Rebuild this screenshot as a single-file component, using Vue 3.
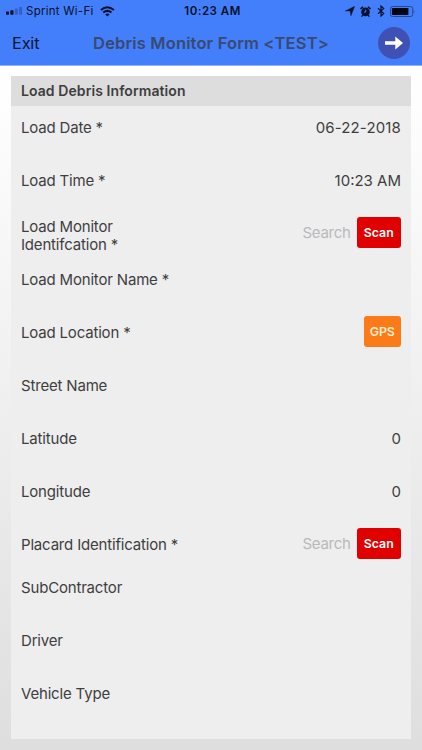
<script setup>
const rows = [
  { label: 'Load Date', required: true, value: '06-22-2018', kind: 'date' },
  { label: 'Load Time', required: true, value: '10:23 AM' },
  { label: 'Load Monitor Identifcation', required: true, search: true, button: 'Scan', kind: 'double' },
  { label: 'Load Monitor Name', required: true },
  { label: 'Load Location', required: true, button: 'GPS' },
  { label: 'Street Name' },
  { label: 'Latitude', value: '0' },
  { label: 'Longitude', value: '0' },
  { label: 'Placard Identification', required: true, search: true, button: 'Scan', kind: 'short' },
  { label: 'SubContractor' },
  { label: 'Driver' },
  { label: 'Vehicle Type' },
]
</script>

<template>
  <div class="screen">
    <header class="top">
      <div class="status">
        <div class="carrier">
          <svg class="signal" width="17" height="8" viewBox="0 0 17 8">
            <rect x="0" y="4.5" width="3" height="3.2" rx=".7" />
            <rect x="4.3" y="3.2" width="3.2" height="4.5" rx=".7" />
            <rect x="8.8" y="1.6" width="3" height="6.1" rx=".7" opacity=".28" />
            <rect x="13.1" y="0" width="3" height="7.7" rx=".7" opacity=".28" />
          </svg>
          <span class="carrier-name">Sprint Wi-Fi</span>
          <svg class="wifi" width="15" height="11" viewBox="0 0 15 11" fill="none" stroke="#06102a" stroke-width="2">
            <path d="M.9 4.1Q7.3-1.6 13.9 4.1" />
            <path d="M3.3 6.6Q7.4 3.2 11.5 6.6" />
            <path d="M5.2 8.3Q7.4 6.7 9.6 8.3L7.4 10.6Z" fill="#06102a" stroke="none" />
          </svg>
        </div>
        <span class="clock">10:23 AM</span>
        <div class="indicators">
          <svg width="10" height="10" viewBox="0 0 10 10"><path d="M9.7.3 5.9 9.8 5.2 5H.3Z" fill="#06102a" stroke="#06102a" stroke-width=".4" /></svg>
          <svg width="11" height="11" viewBox="0 0 11 11">
            <circle cx="5.5" cy="5.9" r="4.3" fill="#06102a" />
            <path d="M.9 2.6 2.7 1.1M10.1 2.6 8.3 1.1M2.6 9.4 2 10.2M8.4 9.4 9 10.2" stroke="#06102a" stroke-width="1.4" stroke-linecap="round" />
            <path d="M5.7 3.6V6.1H3.9" fill="none" stroke="#447ffb" stroke-width="1" />
          </svg>
          <svg width="8" height="12" viewBox="0 0 8 12"><path d="M1 3.2 6.7 8.4 4 11V1L6.7 3.6 1 8.8" fill="none" stroke="#06102a" stroke-width="1.2" /></svg>
          <svg width="25" height="11" viewBox="0 0 25 11">
            <rect x=".5" y=".5" width="22.2" height="10" rx="2" fill="none" stroke="#244694" />
            <rect x="1.9" y="1.9" width="16.5" height="7.2" rx=".7" fill="#02060f" />
            <path d="M23.6 3.7Q25.1 5.5 23.6 7.3Z" fill="#244694" />
          </svg>
        </div>
      </div>
      <nav class="nav">
        <span class="exit">Exit</span>
        <h1 class="title">Debris Monitor Form &lt;TEST&gt;</h1>
        <button class="next" aria-label="Next">
          <svg width="18" height="14" viewBox="0 0 18 14"><path d="M0 5.2H10.3V.6L18 7 10.3 13.4V8.8H0Z" fill="#fff" /></svg>
        </button>
      </nav>
    </header>
    <main class="panel">
      <h2 class="section">Load Debris Information</h2>
      <div v-for="row in rows" :key="row.label" class="row" :class="row.kind">
        <span class="label">{{ row.label }}{{ row.required ? ' *' : '' }}</span>
        <span v-if="row.value" class="value">{{ row.value }}</span>
        <div v-if="row.button" class="actions">
          <span v-if="row.search" class="search">Search</span>
          <button class="btn" :class="row.button.toLowerCase()">{{ row.button }}</button>
        </div>
      </div>
    </main>
  </div>
</template>

<style>
body { margin: 0; }
</style>

<style scoped>
.screen {
  box-sizing: border-box;
  width: 422px;
  height: 750px;
  overflow: hidden;
  background: linear-gradient(#fff 66px, #fdfdfd 120px, #dedede 750px);
  font-family: Inter, "Liberation Sans", sans-serif;
  color: #3e3e3e;
}
.top { height: 65px; background: #447ffb; border-bottom: 1px solid #8fb2fc; }
.status {
  display: grid;
  grid-template-columns: 1fr auto 1fr;
  align-items: center;
  height: 22px;
  padding: 0 7px 0 6px;
  color: #06102a;
  font-size: 11.5px;
}
.carrier { display: flex; align-items: center; }
.signal { margin-right: 3px; fill: #06102a; }
.carrier-name { letter-spacing: 0.25px; }
.wifi { margin-left: 6px; }
.clock { margin-left: 4px; font-weight: 600; letter-spacing: 0.5px; }
.indicators { display: flex; align-items: center; justify-content: flex-end; gap: 5.5px; }
.nav {
  display: grid;
  grid-template-columns: 1fr auto 1fr;
  align-items: center;
  height: 42px;
  padding: 0 12px;
}
.exit { font-size: 16.3px; letter-spacing: -0.15px; color: #061532; }
.title { margin: 0; font-size: 16.5px; font-weight: 600; letter-spacing: 0.15px; color: #39496f; white-space: nowrap; }
.next {
  display: grid;
  place-items: center;
  justify-self: end;
  width: 32px;
  height: 32px;
  padding: 0;
  border: 0;
  border-radius: 50%;
  background: #3f51b5;
}
.panel { height: 663px; margin: 10px 11px 0; background: #eee; }
.section {
  height: 30px;
  margin: 0;
  padding-left: 10px;
  background: #ddd;
  font-size: 14px;
  font-weight: 600;
  letter-spacing: 0.08px;
  line-height: 30px;
}
.row {
  display: flex;
  justify-content: space-between;
  box-sizing: border-box;
  height: 53px;
  padding: 0 10px;
  font-size: 15px;
  line-height: 18px;
}
.row.double { height: 46px; }
.row.short { height: 43px; }
.label { max-width: 190px; padding-top: 13px; letter-spacing: -0.18px; }
.double .label { width: 125px; padding-top: 6px; }
.value { padding-top: 13px; }
.date .value { letter-spacing: 0.15px; }
.actions { display: flex; align-items: center; height: 31px; margin-top: 5px; gap: 6px; }
.search { color: #b9b9bb; letter-spacing: -0.3px; }
.btn {
  width: 44.5px;
  height: 31px;
  padding: 0;
  border: 0;
  border-radius: 3px;
  background: #e10000;
  color: #fff;
  font: 600 12.3px Inter, "Liberation Sans", sans-serif;
}
.btn.gps { width: 37.5px; background: #fa7b17; color: #ffedcf; }
</style>
